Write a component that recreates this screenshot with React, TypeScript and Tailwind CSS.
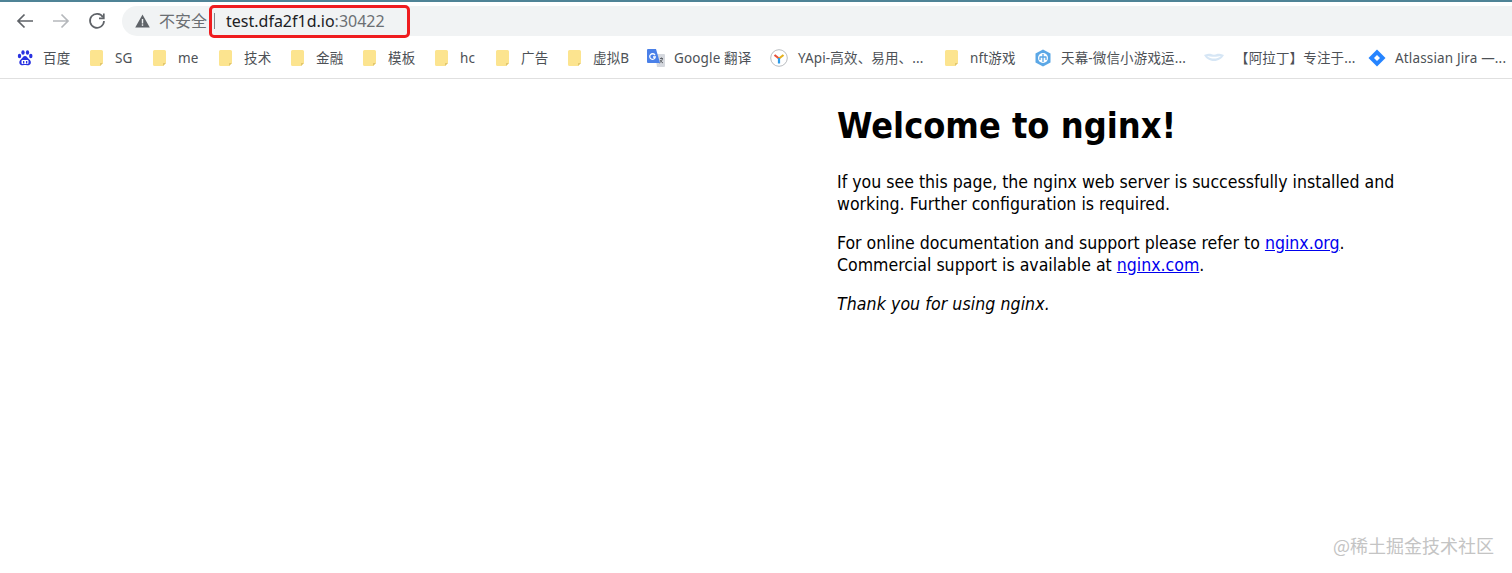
import React from "react";

const cjk = "font-['Noto_Sans','Noto_Sans_CJK_SC',sans-serif]";

function Folder() {
  return (
    <svg width="16" height="18" viewBox="1 0 16 18" className="shrink-0">
      <path d="M2.500 1h10a1.500 1.500 0 0 1 1.500 1.500V14l-3 3H2.500A1.500 1.500 0 0 1 1 15.500v-13A1.500 1.500 0 0 1 2.500 1z" fill="#fce48f" />
      <path d="M11 17v-2.500a.5.5 0 0 1 .5-.5H14z" fill="#e0c56c" />
    </svg>
  );
}

function Baidu() {
  return (
    <svg width="16" height="18" viewBox="0 0 16 18" className="shrink-0">
      <g fill="#2932e1">
        <ellipse cx="2.500" cy="7" rx="1.700" ry="2.200" />
        <ellipse cx="6" cy="3.500" rx="1.700" ry="2.300" />
        <ellipse cx="10.500" cy="3.500" rx="1.700" ry="2.300" />
        <ellipse cx="13.800" cy="7" rx="1.700" ry="2.200" />
        <path d="M8 7c-2 0-2.500 2-4 3.200C2.500 11.500 2 13 2.500 14.500 3 16 4.500 16.500 6 16.200c1.300-.2 2.700-.2 4 0 1.500.3 3.200-.2 3.700-1.700.5-1.500 0-3-1.600-4.300C10.500 9 10 7 8 7z" />
      </g>
      <rect x="4.500" y="11" width="7" height="4" rx="1" fill="#fff" />
      <rect x="6" y="12" width="1.300" height="2.500" fill="#2932e1" />
      <rect x="9" y="12" width="1.300" height="2.500" fill="#2932e1" />
    </svg>
  );
}

function GTranslate() {
  return (
    <svg width="19" height="18" viewBox="0 0 19 18" className="shrink-0">
      <path d="M8 5h9a1 1 0 0 1 1 1v11a1 1 0 0 1-1 1H10z" fill="#d5d8de" />
      <path d="M13 9.500h3M14.500 8.500v1M15.500 9.500c-.4 2-1.500 3.500-3 4.500M13 11c.6 1.300 1.700 2.300 3 3" stroke="#5f6368" strokeWidth="1" fill="none" />
      <path d="M1 0h8l4 14H1a1 1 0 0 1-1-1V1a1 1 0 0 1 1-1z" fill="#4a80e8" />
      <path d="M8 6.200A2.800 2.800 0 1 0 8.300 8H6" stroke="#fff" strokeWidth="1.300" fill="none" />
    </svg>
  );
}

function YApi() {
  return (
    <svg width="18" height="18" viewBox="0 0 18 18" className="shrink-0">
      <circle cx="9" cy="9" r="8.300" fill="#fff" stroke="#b9bcc0" strokeWidth="1" />
      <path d="M9 9.500 4.500 6" stroke="#e8503a" strokeWidth="2.200" />
      <path d="M9 9.500 13.500 6" stroke="#e5b11e" strokeWidth="2.200" />
      <path d="M9 9v5.500" stroke="#2f9be8" strokeWidth="2.200" />
    </svg>
  );
}

function Tianmu() {
  return (
    <svg width="18" height="18" viewBox="0 0 18 18" className="shrink-0">
      <path d="M9 .5 16.500 4.500v9L9 17.500 1.500 13.500v-9z" fill="#5ba7e6" />
      <circle cx="9" cy="9" r="5" fill="#fff" />
      <path d="M9 5v8M6 7.500v3.500M12 7.500v3.500M6 8h6" stroke="#5ba7e6" strokeWidth="1.300" fill="none" />
    </svg>
  );
}

function Lips() {
  return (
    <svg width="20" height="18" viewBox="0 0 20 18" className="shrink-0">
      <path d="M0 6c3-1 6-1.500 7-1 1 .5 2 .8 3 .8s2-.3 3-.8c1-.5 4 0 7 1-2 3.500-5.500 6-10 6S2 9.500 0 6z" fill="#d6e6f5" />
      <path d="M3 7c4 1 10 1 14 0-2 1.800-4.500 2.600-7 2.600S5 8.800 3 7z" fill="#fff" />
    </svg>
  );
}

function Jira() {
  return (
    <svg width="18" height="18" viewBox="0 0 18 18" className="shrink-0">
      <path d="M9 .5 17.500 9 9 17.500.5 9z" fill="#2684ff" />
      <path d="M9 6 12 9 9 12 6 9z" fill="#fff" />
    </svg>
  );
}

const bookmarks: { label: string; icon: React.ReactNode; box: string; gap: string }[] = [
  { label: "百度", icon: <Baidu />, box: "w-[73px]", gap: "gap-[10px]" },
  { label: "SG", icon: <Folder />, box: "w-[63px]", gap: "gap-[9px]" },
  { label: "me", icon: <Folder />, box: "w-[66px]", gap: "gap-[9px]" },
  { label: "技术", icon: <Folder />, box: "w-[72px]", gap: "gap-[9px]" },
  { label: "金融", icon: <Folder />, box: "w-[72px]", gap: "gap-[9px]" },
  { label: "模板", icon: <Folder />, box: "w-[72px]", gap: "gap-[9px]" },
  { label: "hc", icon: <Folder />, box: "w-[61px]", gap: "gap-[9px]" },
  { label: "广告", icon: <Folder />, box: "w-[72px]", gap: "gap-[9px]" },
  { label: "虚拟B", icon: <Folder />, box: "w-[79px]", gap: "gap-[9px]" },
  { label: "Google 翻译", icon: <GTranslate />, box: "w-[123px]", gap: "gap-[8px]" },
  { label: "YApi-高效、易用、...", icon: <YApi />, box: "w-[175px]", gap: "gap-[10px]" },
  { label: "nft游戏", icon: <Folder />, box: "w-[89px]", gap: "gap-[9px]" },
  { label: "天幕-微信小游戏运...", icon: <Tianmu />, box: "w-[170px]", gap: "gap-[9px]" },
  { label: "【阿拉丁】专注于...", icon: <Lips />, box: "w-[164px]", gap: "gap-[11px]" },
  { label: "Atlassian Jira —...", icon: <Jira />, box: "w-[144px]", gap: "gap-[9px]" },
];

export default function App() {
  return (
    <div className={`w-[1512px] h-[573px] overflow-hidden bg-white relative ${cjk}`}>
      <div className="h-[2px] bg-[#4f8396]" />
      <div className="h-[38px] flex items-center">
        <div className="w-[122px] shrink-0 flex items-center pl-[16px] gap-[18px] text-[#5f6368]">
          <svg width="18" height="18" viewBox="0 0 18 18" fill="none" stroke="#5f6368" strokeWidth="1.700">
            <path d="M17 9H2M8.500 2.500 2 9l6.500 6.500" />
          </svg>
          <svg width="18" height="18" viewBox="0 0 18 18" fill="none" stroke="#b5b8bc" strokeWidth="1.700">
            <path d="M1 9h15M9.500 2.500 16 9l-6.500 6.500" />
          </svg>
          <svg width="18" height="18" viewBox="0 0 18 18" fill="none" stroke="#5f6368" strokeWidth="1.700">
            <path d="M15 5.200A7 7 0 1 0 16 9" />
            <path d="M15.800 1.500v4.800H11" />
          </svg>
        </div>
        <div className="flex-1 h-[30px] -mt-[1px] bg-[#f1f3f4] rounded-l-[15px] flex items-center pl-[13px]">
          <svg width="15" height="14" viewBox="0 0 15 14" className="shrink-0">
            <path d="M7.500 .5 14.800 13.500H.2z" fill="#5f6368" />
            <rect x="6.800" y="5" width="1.400" height="4.500" fill="#f1f3f4" />
            <rect x="6.800" y="10.300" width="1.400" height="1.500" fill="#f1f3f4" />
          </svg>
          <span className="ml-[9px] text-[16px] text-[#6b6f73] whitespace-nowrap">不安全</span>
          <span className="ml-[7px] w-px h-[16px] bg-[#80868b]" />
          <span className="ml-[11px] text-[16px] text-[#202124] whitespace-nowrap">
            test.dfa2f1d.io<span className="text-[#6b6f73]">:30422</span>
          </span>
        </div>
      </div>
      <div className="h-[36px] pb-[2px] border-b border-[#e0e0e0] box-content flex items-center pl-[17px]">
        {bookmarks.map((b) => (
          <div key={b.label} className={`${b.box} ${b.gap} shrink-0 flex items-center`}>
            {b.icon}
            <span className="text-[13.500px] tracking-[0.15px] text-[#4d5156] whitespace-nowrap">{b.label}</span>
          </div>
        ))}
      </div>
      <main className="ml-[837px] w-[570px] font-['DejaVu_Sans_Condensed','DejaVu_Sans',sans-serif] text-[17.560px] leading-[21.500px] text-black">
        <h1 className="mt-[24px] text-[35.800px] leading-[46px] font-bold">Welcome to nginx!</h1>
        <p className="mt-[23px]">
          If you see this page, the nginx web server is successfully installed and working. Further configuration is required.
        </p>
        <p className="mt-[18px]">
          For online documentation and support please refer to <a className="text-[#0000ee] underline" href="#">nginx.org</a>.
          <br />
          Commercial support is available at <a className="text-[#0000ee] underline" href="#">nginx.com</a>.
        </p>
        <p className="mt-[18px] italic tracking-[0.08px]">Thank you for using nginx.</p>
      </main>
      <div className="absolute left-[209px] top-[5px] w-[201px] h-[33px] border-[3px] border-[#ef1c1f] rounded-[5px]" />
      <div className="absolute right-[18px] top-[533px] text-[18px] leading-[24px] text-[#c4c4c4] whitespace-nowrap font-['Noto_Sans_CJK_SC',sans-serif]">
        @稀土掘金技术社区
      </div>
    </div>
  );
}
